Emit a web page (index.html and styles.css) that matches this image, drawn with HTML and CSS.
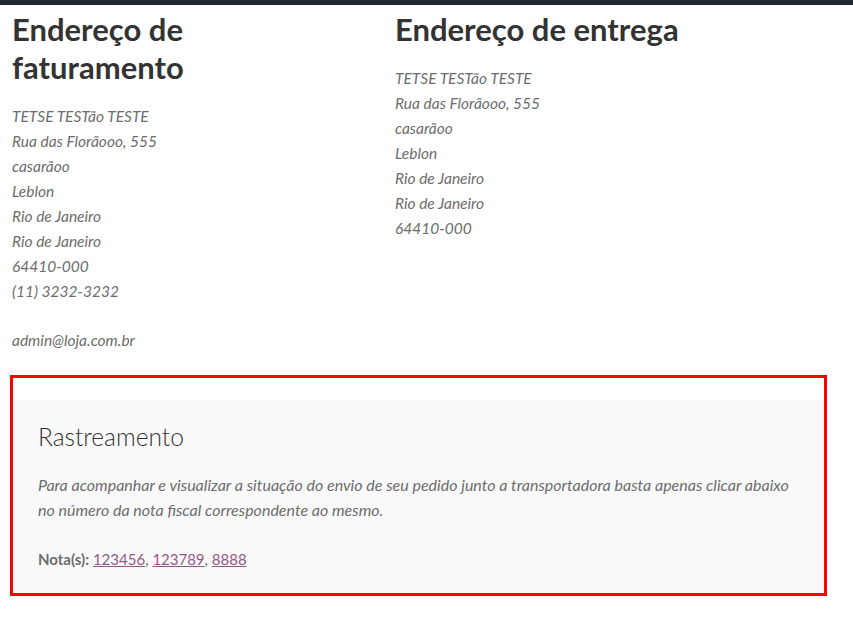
FILE: index.html
```html
<!DOCTYPE html>
<html lang="pt-BR">
<head>
    <meta charset="UTF-8">
    <meta name="viewport" content="width=device-width, initial-scale=1.0">
    <title>Detalhes do pedido</title>
    <link rel="stylesheet" href="styles.css">
</head>
<body>

<div class="top-bar"></div>

<div class="page">
    <section class="addresses">
        <div class="address-col">
            <h2>Endereço de faturamento</h2>
            <address>
                TETSE TESTão TESTE<br>
                Rua das Florãooo, 555<br>
                casarãoo<br>
                Leblon<br>
                Rio de Janeiro<br>
                Rio de Janeiro<br>
                64410-000
                <p class="address-phone">(11) 3232-3232</p>
                <p class="address-email">admin@loja.com.br</p>
            </address>
        </div>

        <div class="address-col">
            <h2>Endereço de entrega</h2>
            <address>
                TETSE TESTão TESTE<br>
                Rua das Florãooo, 555<br>
                casarãoo<br>
                Leblon<br>
                Rio de Janeiro<br>
                Rio de Janeiro<br>
                64410-000
            </address>
        </div>
    </section>

    <!-- Tracking -->
    <section class="tracking-box">
        <div class="tracking-panel">
            <h3>Rastreamento</h3>
            <p class="tracking-text">Para acompanhar e visualizar a situação do envio de seu pedido junto a transportadora basta apenas clicar abaixo no número da nota fiscal correspondente ao mesmo.</p>
            <p class="tracking-notes">
                <strong>Nota(s):</strong>
                <a href="#">123456</a>, <a href="#">123789</a>, <a href="#">8888</a>
            </p>
        </div>
    </section>
</div>

</body>
</html>
```

FILE: styles.css
```css
:root {
    --heading: #333333;
    --text: #6d6d6d;
    --link: #96588a;
    --panel-bg: #f9f9f9;
    --alert: #ff0000;
}

* {
    box-sizing: border-box;
    margin: 0;
    padding: 0;
}

body {
    font-family: 'Lato', sans-serif;
    color: var(--text);
    background: #ffffff;
}

.top-bar {
    height: 5px;
    background-color: #23282d;
}

.page {
    padding: 0 26px 0 10px;
}

/* Addresses */
.addresses {
    display: grid;
    grid-template-columns: 330px 1fr;
    column-gap: 53px;
    padding: 5px 0 0 2px;
}

.address-col h2 {
    font-size: 31px;
    font-weight: 700;
    line-height: 38px;
    color: var(--heading);
    margin-bottom: 18px;
}

address {
    font-style: italic;
    font-size: 15.5px;
    line-height: 25px;
}

.address-email {
    margin-top: 24px;
}

/* Tracking */
.tracking-box {
    margin-top: 22px;
    border: 3px solid var(--alert);
    padding-top: 22px;
}

.tracking-panel {
    background-color: var(--panel-bg);
    padding: 22px 25px 21px;
}

.tracking-panel h3 {
    font-size: 24.5px;
    font-weight: 300;
    color: var(--heading);
    line-height: 30px;
    margin-bottom: 20px;
}

.tracking-text {
    font-style: italic;
    font-size: 16px;
    line-height: 25px;
    margin-bottom: 25px;
}

.tracking-notes {
    font-size: 15px;
    line-height: 25px;
}

.tracking-notes strong {
    font-weight: 700;
}

.tracking-notes a {
    color: var(--link);
}
```
